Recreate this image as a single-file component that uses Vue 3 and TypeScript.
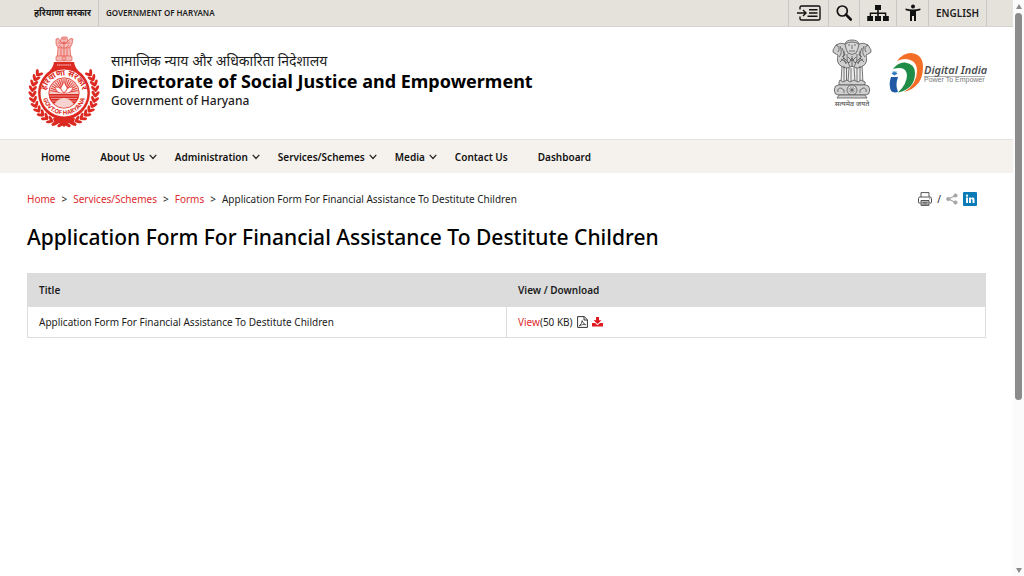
<script setup lang="ts">
interface NavItem {
  label: string
  menu: boolean
}

const navItems: NavItem[] = [
  { label: 'Home', menu: false },
  { label: 'About Us', menu: true },
  { label: 'Administration', menu: true },
  { label: 'Services/Schemes', menu: true },
  { label: 'Media', menu: true },
  { label: 'Contact Us', menu: false },
  { label: 'Dashboard', menu: false },
]

const crumbs: string[] = ['Home', 'Services/Schemes', 'Forms']
const pageTitle = 'Application Form For Financial Assistance To Destitute Children'

// Wreath leaves run up both sides of the state emblem, from the foot of the disc.
const leaves: string[] = []
for (let i = 0; i < 13; i++) {
  const angle = 6 + i * 10
  for (const side of [-1, 1]) {
    for (const [radius, lean] of [[30, 35], [33, -35]]) {
      const rad = ((90 - side * angle) * Math.PI) / 180
      const x = 36 + radius * Math.cos(rad)
      const y = 56 + radius * Math.sin(rad)
      const turn = -side * (angle + lean)
      leaves.push(`translate(${x.toFixed(2)} ${y.toFixed(2)}) rotate(${turn})`)
    }
  }
}

const rays: number[] = Array.from({ length: 17 }, (_, i) => -80 + i * 10)
const spokes: number[] = Array.from({ length: 6 }, (_, i) => i * 30)
</script>

<template>
  <div class="window">
    <div class="page">
      <div class="topbar">
        <a class="top-text first" href="#" lang="hi">हरियाणा सरकार</a>
        <a class="top-text" href="#">GOVERNMENT OF HARYANA</a>
        <div class="tools">
          <button class="w-skip" type="button" aria-label="Skip to main content">
            <svg width="24" height="16" viewBox="0 0 24 16" fill="none" stroke="#111" stroke-width="1.4">
              <path d="M3 4.5V2.5Q3 1 4.500 1H21.500Q23 1 23 2.500V13.500Q23 15 21.500 15H4.500Q3 15 3 13.500V11.500" />
              <path d="M0 8H8.500M6 5L9 8L6 11M12 4.700H20.500M12 8H20.500M10.500 11.300H20.500" />
            </svg>
          </button>
          <button class="w-search" type="button" aria-label="Search">
            <svg width="16" height="16" viewBox="0 0 16 16" fill="none" stroke="#111">
              <circle cx="6.300" cy="6" r="5" stroke-width="1.700" />
              <path d="M10 9.700L14.800 14.500" stroke-width="2.600" stroke-linecap="round" />
            </svg>
          </button>
          <button class="w-map" type="button" aria-label="Site map">
            <svg width="22" height="18" viewBox="0 0 22 18" fill="#111">
              <path d="M8 1h6v5h-2.200v2.500H19.300V12H21.800v5H16v-5h1.900V9.900H11.800V12H14v5H8v-5h2.200V9.900H4.100V12H6v5H.2v-5H2.700V8.500H10.200V6H8z" />
            </svg>
          </button>
          <button class="w-access" type="button" aria-label="Accessibility">
            <svg width="16" height="18" viewBox="0 0 16 18" fill="#111">
              <circle cx="8" cy="2.500" r="2" />
              <path d="M.8 4.600Q4 5.500 8 5.500T15.200 4.600Q16 5.300 15.200 6.300L11 7.200V17H9V12H7V17H5V7.200L.8 6.300Q0 5.300 .8 4.600z" />
            </svg>
          </button>
          <button class="w-lang" type="button">ENGLISH</button>
        </div>
      </div>

      <header class="header">
        <a class="brand" href="#">
          <svg class="emblem" width="72" height="92" viewBox="0 0 72 92" role="img" aria-label="Haryana state emblem">
            <defs>
              <path id="arc-top" d="M19.300 66A18.500 18.500 0 1 1 52.700 66" />
              <path id="arc-bottom" d="M14.500 60A21.700 21.700 0 0 0 57.500 60" />
            </defs>
            <g fill="#dc2a22">
              <ellipse v-for="(t, i) in leaves" :key="i" :transform="t" rx="3.600" ry="1.500" />
              <path d="M26 26H46Q47 33 53 37A27 27 0 0 1 45 82L48 90L41 87L36 91L31 87L24 90L27 82A27 27 0 0 1 19 37Q25 33 26 26z" />
            </g>
            <circle cx="36" cy="57" r="23.500" fill="#fff" />
            <circle cx="36" cy="57" r="15.200" fill="#f7c9c6" stroke="#dc2a22" stroke-width=".8" />
            <g stroke="#dc2a22" stroke-width=".8">
              <path v-for="r in rays" :key="r" d="M36 52V43" :transform="`rotate(${r} 36 57)`" />
            </g>
            <path d="M21 58H51A15 15 0 0 1 46 68Q41 62 36 62T26 68A15 15 0 0 1 21 58z" fill="#dc2a22" />
            <path d="M22 60H50M23 62.500H49M24 65H48" stroke="#fff" stroke-width=".5" />
            <path d="M36 57Q31 54 34 50L36 46L38 50Q41 54 36 57Q29 58 27 51Q33 51 36 57Q43 58 45 51Q39 51 36 57z" fill="#fff" stroke="#dc2a22" stroke-width=".5" />
            <path d="M27 68Q36 58 45 68Q36 75 27 68z" fill="#f6d3d1" />
            <g fill="#dc2a22" font-weight="700">
              <text font-size="8"><textPath href="#arc-top" startOffset="50%" text-anchor="middle">हरियाणा सरकार</textPath></text>
              <text font-size="6"><textPath href="#arc-bottom" startOffset="50%" text-anchor="middle">GOVT.OF HARYANA</textPath></text>
            </g>
            <g fill="#f4b9b5" stroke="#dc2a22" stroke-width=".5">
              <path d="M30 11H42L43 23H29z" />
              <path d="M28 3Q31 1 32 5L34 1H39L40 5Q42 1 45 3L44 8Q43 12 40 12H32Q29 12 28 8z" />
              <path d="M32 5Q36 10 40 5M31 9L34 12M41 9L38 12M33 13V22M36 5V22M39 13V22M30 7H42M34 3H38" fill="none" />
              <rect x="28" y="20" width="16" height="5" rx="1" />
              <circle cx="36" cy="22.500" r="1.800" />
            </g>
            <path d="M29 29H43" stroke="#fff" stroke-width="1.200" stroke-dasharray="1.500 .6" opacity=".8" />
          </svg>
          <span class="names">
            <span class="name-hi" lang="hi">सामाजिक न्याय और अधिकारिता निदेशालय</span>
            <strong class="name-en">Directorate of Social Justice and Empowerment</strong>
            <span class="name-gov">Government of Haryana</span>
          </span>
        </a>
        <div class="marks">
          <svg width="40" height="70" viewBox="0 0 40 70" role="img" aria-label="National emblem of India">
            <g fill="#cfcfcf" stroke="#555" stroke-width=".8" stroke-linejoin="round">
              <path d="M10 26L9 44H31L30 26z" fill="#ececec" />
              <path d="M13 5Q8 3 4 6L1 11Q0 14 4 15L6 16Q4 24 9 27Q15 31 20 27Q25 31 31 27Q36 24 34 16L36 15Q40 14 39 11L36 6Q32 3 27 5Q26 1 20 1T13 5z" />
              <path d="M13 5Q14 11 16 14Q20 17 24 14Q26 11 27 5Q20 1 13 5z" fill="#d6d6d6" />
              <path d="M4 6Q9 8 6 13M36 6Q31 8 34 13M8 7Q11 14 7 18M32 7Q29 14 33 18M12 12Q10 19 14 25M28 12Q30 19 26 25M15 15Q14 22 18 28M25 15Q26 22 22 28M20 17V28M9 20L15 24M31 20L25 24M16 6H18M22 6H24M20 6V10M17 12H23M8 23L12 19L17 24L20 19L23 24L28 19L32 23M10 9L13 16L10 18M30 9L27 16L30 18M16 18L20 22L24 18" fill="none" />
              <path d="M12 27V43M14.500 29V43M17 29L16 43M19 29V43M22 29L23 43M25 29V43M28 27V43" fill="none" />
              <path d="M8 41L11 43L15 41L18 43L22 41L26 43L29 41L33 43V46H7V43z" />
              <rect x="2.500" y="46" width="35" height="10" rx="4" />
              <circle cx="20" cy="51" r="5" fill="#eee" />
              <path v-for="s in spokes" :key="s" d="M20 46.500V55.500" :transform="`rotate(${s} 20 51)`" stroke-width=".5" />
              <path d="M6 53Q5 49 9 49L12 51V54M34 53Q35 49 31 49L28 51V54M7 56L5 59H35L33 56z" />
            </g>
            <text x="20" y="67" text-anchor="middle" font-size="7" font-weight="500" fill="#555">सत्यमेव जयते</text>
          </svg>
          <svg class="digital" width="98" height="42" viewBox="0 0 98 42" role="img" aria-label="Digital India">
            <path d="M8 8Q14 0 22 0Q34 1 34 14Q34 34 15 39Q28 31 28 18Q28 7 17 6Q12 6 8 8z" fill="#f36f28" />
            <path d="M4 16Q9 9 16 9.500Q26 11 26 20Q26 36 9 39.500Q18 31 18 22Q17 15 11 15Q7 15 4 16z" fill="#1f8c47" />
            <path d="M2 24H9Q6 32 9 39Q1 41 1 34Q0 30 2 24z" fill="#2259a7" />
            <path d="M5.500 18.500L8.500 20.500L5.500 22.500L2.500 20.500z" fill="#2f78bd" />
            <path d="M3 19H8" stroke="#4f91ca" stroke-width=".7" />
            <text x="35" y="21" font-size="11" font-style="italic" font-weight="600" fill="#4d4f53">Digital India</text>
            <path d="M35 23.500H96" stroke="#777" stroke-width=".6" />
            <text class="tagline" x="35" y="29" font-size="7" fill="#77797c">Power To Empower</text>
          </svg>
        </div>
      </header>

      <nav class="nav" aria-label="Main">
        <a v-for="item in navItems" :key="item.label" href="#" :class="{ menu: item.menu }">
          {{ item.label }}
          <svg v-if="item.menu" width="8" height="6" viewBox="0 0 8 6" fill="none" stroke="#222" stroke-width="1.200">
            <path d="M.7 .8L4 4.500L7.300 .8" />
          </svg>
        </a>
      </nav>

      <main class="main">
        <div class="crumb-row">
          <nav class="crumbs" aria-label="Breadcrumb">
            <template v-for="crumb in crumbs" :key="crumb">
              <a href="#">{{ crumb }}</a><span>&gt;</span>
            </template>
            <span>{{ pageTitle }}</span>
          </nav>
          <div class="share">
            <button type="button" aria-label="Print">
              <svg width="14" height="14" viewBox="0 0 14 14" fill="none" stroke="#555">
                <path d="M3 5V.6H11V5" />
                <path d="M2.500 11H1Q.5 11 .5 10.500V6.500Q.5 5 2 5H12Q13.500 5 13.500 6.500V10.500Q13.500 11 13 11H11.500" />
                <path d="M3 8.500H11V13.400H3z" fill="#bbb" />
                <path d="M4.500 10.500H9.500M4.500 12H9.500M11 6.800H12.300" stroke-width=".8" />
              </svg>
            </button>
            <span>/</span>
            <button type="button" aria-label="Share">
              <svg width="12" height="12" viewBox="0 0 12 12" fill="#a5a5a5" stroke="#a5a5a5">
                <path d="M9.500 2.500L2.500 6L9.500 9.500" fill="none" stroke-width="1.200" />
                <circle cx="9.500" cy="2.500" r="1.600" /><circle cx="2.300" cy="6" r="1.600" /><circle cx="9.500" cy="9.500" r="1.600" />
              </svg>
            </button>
            <a href="#" aria-label="LinkedIn">
              <svg width="14" height="14" viewBox="0 0 14 14">
                <rect width="14" height="14" rx="1" fill="#0b7bb8" />
                <path d="M3 5.500H5V11H3zM6 5.500H7.900V6.300Q9 5 10.500 5.600Q11.500 6 11.500 8V11H9.500V8.200Q9.500 7 8.700 7T7.900 8.200V11H6z" fill="#fff" />
                <circle cx="4" cy="3.700" r="1.150" fill="#fff" />
              </svg>
            </a>
          </div>
        </div>

        <h1>{{ pageTitle }}</h1>

        <table>
          <thead>
            <tr><th scope="col">Title</th><th scope="col">View / Download</th></tr>
          </thead>
          <tbody>
            <tr>
              <td>{{ pageTitle }}</td>
              <td>
                <div class="file">
                  <span><a href="#">View</a>(50 KB)</span>
                  <svg width="11" height="12" viewBox="0 0 11 12" fill="none" stroke="#333">
                    <path d="M.6 .6H7.200L10.400 3.700V11.400H.6zM7 .8V4H10.200" />
                    <path d="M2.200 9.900Q5 8 5.200 4.500Q5.500 7.500 8.700 8.700Q5.500 7.700 2.200 9.900z" stroke-width=".8" />
                  </svg>
                  <a href="#" aria-label="Download">
                    <svg width="11" height="10" viewBox="0 0 11 10" fill="#e0191f">
                      <path d="M4 0H7V3.200H9.500L5.500 7L1.500 3.200H4zM0 6H3L5.500 8.200L8 6H11V9.500H0z" />
                    </svg>
                  </a>
                </div>
              </td>
            </tr>
          </tbody>
        </table>
      </main>
    </div>

    <div class="scrollbar" aria-hidden="true">
      <i class="arrow up"></i>
      <i class="thumb"></i>
      <i class="rest"></i>
      <i class="arrow down"></i>
    </div>
  </div>
</template>

<style>
body {
  overflow: hidden;
}
</style>

<style scoped>
.window {
  display: grid;
  grid-template-columns: 1fr 11px;
  height: 100vh;
  background: #fff;
  color: #1c1c1c;
  font-family: "Noto Sans", "Noto Sans Devanagari", sans-serif;
  font-size: 10px;
  line-height: 16px;
}
.page {
  overflow: hidden;
}
a {
  color: #de2b2f;
  text-decoration: none;
}
button {
  display: inline-flex;
  align-items: center;
  justify-content: center;
  padding: 0;
  border: 0;
  background: none;
  color: inherit;
  font: inherit;
}
svg {
  display: block;
  flex: none;
}
.topbar {
  display: flex;
  height: 26px;
  padding: 0 26px 0 27px;
  border-bottom: 1px solid #d5d3cf;
  background: #e5e2db;
}
.top-text {
  display: flex;
  align-items: center;
  padding: 0 7px;
  color: #1c1c1c;
  font-size: 8px;
  font-weight: 600;
}
.top-text.first {
  border-right: 1px solid #c9c7c3;
  font-size: 9px;
  font-weight: 700;
}
.tools {
  display: flex;
  margin-left: auto;
  border-left: 1px solid #c9c7c3;
}
.tools button {
  border-right: 1px solid #c9c7c3;
}
.w-skip {
  width: 40px;
}
.w-search {
  width: 31px;
}
.w-map {
  width: 37px;
}
.w-access {
  width: 32px;
}
.tools .w-lang {
  width: 58px;
  font-weight: 600;
}
.header {
  display: flex;
  align-items: flex-start;
  justify-content: space-between;
  height: 103px;
  padding: 9px 26px 0 28px;
}
.brand {
  display: flex;
  gap: 11px;
  color: #1c1c1c;
}
.names {
  display: flex;
  flex-direction: column;
  padding-top: 15px;
}
.name-hi {
  font-size: 14px;
  line-height: 20px;
}
.name-en {
  color: #000;
  font-size: 18px;
  line-height: 20px;
}
.name-gov {
  font-size: 12px;
  font-weight: 500;
  line-height: 20px;
}
.marks {
  display: flex;
  gap: 17px;
  padding-top: 3px;
}
.digital {
  margin-top: 14px;
}
.tagline {
  font-family: "Liberation Sans", sans-serif;
}
.nav {
  display: flex;
  align-items: center;
  height: 33px;
  padding: 0 26px;
  border-top: 1px solid #e3e3e3;
  background: #f5f2ed;
}
.nav a {
  display: flex;
  align-items: center;
  gap: 4px;
  padding: 0 15px;
  color: #111;
  font-weight: 600;
}
.nav .menu {
  padding-right: 3px;
}
.main {
  padding: 18px 27px;
}
.crumb-row {
  display: flex;
  justify-content: space-between;
}
.crumbs {
  display: flex;
  gap: 6px;
}
.share {
  display: flex;
  align-items: center;
  gap: 5px;
  padding-right: 9px;
}
h1 {
  margin: 14px 0 20px;
  color: #000;
  font-size: 21px;
  font-weight: 500;
  line-height: 32px;
}
table {
  width: 100%;
  border-collapse: collapse;
  table-layout: fixed;
}
th,
td {
  padding: 7px 11px;
  border: 1px solid #dcdcdc;
  text-align: left;
}
th {
  padding: 8px 11px;
  border-color: #dcdcdc;
  background: #dcdcdc;
  font-weight: 600;
}
.file {
  display: flex;
  align-items: center;
  gap: 4px;
}
.scrollbar {
  display: flex;
  flex-direction: column;
  align-items: center;
  padding: 4px 0 3px;
  background: #fbfbfb;
}
.arrow {
  border: 3px solid transparent;
  border-top: 0;
  border-bottom: 5px solid #8b8b8b;
}
.arrow.down {
  border-top: 5px solid #8b8b8b;
  border-bottom: 0;
}
.thumb {
  flex: 387;
  width: 7px;
  margin-top: 4px;
  border-radius: 4px;
  background: #8b8b8b;
}
.rest {
  flex: 168;
}
</style>
